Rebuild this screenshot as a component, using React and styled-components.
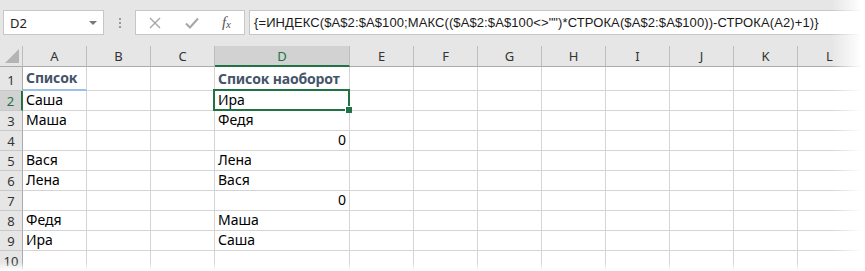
import styled, { createGlobalStyle } from "styled-components";

const GlobalStyle = createGlobalStyle`
  html, body {
    margin: 0;
    padding: 0;
    background: #ffffff;
  }
  body {
    font-family: "Noto Sans", "Liberation Sans", sans-serif;
    overflow: hidden;
  }
`;

const GREEN = "#217346";
const GRID = "#d4d4d4";

const columns = ["A", "B", "C", "D", "E", "F", "G", "H", "I", "J", "K", "L"];
const widths = [64, 64, 64, 135, 64, 64, 64, 64, 64, 64, 64, 64];

const rows = [
  { n: 1, cells: { A: { text: "Список", head: true }, D: { text: "Список наоборот", head: true } } },
  { n: 2, cells: { A: { text: "Саша" }, D: { text: "Ира", active: true } }, selected: true },
  { n: 3, cells: { A: { text: "Маша" }, D: { text: "Федя" } } },
  { n: 4, cells: { D: { text: "0", num: true } } },
  { n: 5, cells: { A: { text: "Вася" }, D: { text: "Лена" } } },
  { n: 6, cells: { A: { text: "Лена" }, D: { text: "Вася" } } },
  { n: 7, cells: { D: { text: "0", num: true } } },
  { n: 8, cells: { A: { text: "Федя" }, D: { text: "Маша" } } },
  { n: 9, cells: { A: { text: "Ира" }, D: { text: "Саша" } } },
  { n: 10, cells: {} },
];

const formula =
  '{=ИНДЕКС($A$2:$A$100;МАКС(($A$2:$A$100<>"")*СТРОКА($A$2:$A$100))-СТРОКА(A2)+1)}';

export default function App() {
  return (
    <>
      <GlobalStyle />
      <Window>
        <Toolbar>
          <NameBox>
            <span>D2</span>
            <DropArrow />
          </NameBox>
          <Grip>
            <i />
            <i />
            <i />
          </Grip>
          <FxBox>
            <svg width="14" height="14" viewBox="0 0 14 14">
              <path d="M2 2 L12 12 M12 2 L2 12" stroke="#a6a6a6" strokeWidth="1.4" fill="none" />
            </svg>
            <svg width="16" height="14" viewBox="0 0 16 14">
              <path d="M2 7.5 L6 11.5 L14 2.5" stroke="#a6a6a6" strokeWidth="2" fill="none" />
            </svg>
            <FxLabel>
              f<sub>x</sub>
            </FxLabel>
          </FxBox>
          <FormulaInput>{formula}</FormulaInput>
        </Toolbar>

        <Sheet>
          <Corner />
          {columns.map((c) => (
            <ColHead key={c} $selected={c === "D"}>
              {c}
            </ColHead>
          ))}
          <ColHead />

          {rows.map((row) => (
            <Row key={row.n} row={row} />
          ))}
        </Sheet>
        <FadeRight />
        <FadeBottom />
      </Window>
    </>
  );
}

const Row = ({ row }) => (
  <>
    <RowHead $selected={row.selected} $tall={row.n === 1}>
      {row.n}
    </RowHead>
    {columns.map((c) => {
      const cell = row.cells[c];
      return (
        <Cell
          key={c}
          $head={cell?.head}
          $num={cell?.num}
          $active={cell?.active}
          $underline={cell?.head && c === "A"}
        >
          {cell?.text}
        </Cell>
      );
    })}
    <Cell />
  </>
);

const Window = styled.div`
  position: relative;
  width: 865px;
  height: 271px;
  overflow: hidden;
  background: #ffffff;
`;

const Toolbar = styled.div`
  height: 46px;
  background: #e6e6e6;
  display: flex;
  align-items: flex-start;
  padding: 10px 0 0 3px;
  box-sizing: border-box;
`;

const NameBox = styled.div`
  width: 101px;
  height: 25px;
  box-sizing: border-box;
  background: #ffffff;
  border: 1px solid #c6c6c6;
  display: flex;
  align-items: center;
  justify-content: space-between;
  padding: 0 6px 0 6px;
  font-size: 13px;
  color: #222;
`;

const DropArrow = styled.span`
  width: 0;
  height: 0;
  border-left: 4px solid transparent;
  border-right: 4px solid transparent;
  border-top: 4px solid #777;
`;

const Grip = styled.div`
  width: 31px;
  height: 25px;
  display: flex;
  flex-direction: column;
  align-items: center;
  justify-content: center;
  gap: 2px;

  i {
    width: 2px;
    height: 2px;
    background: #9a9a9a;
  }
`;

const FxBox = styled.div`
  width: 110px;
  height: 25px;
  box-sizing: border-box;
  background: #ffffff;
  border: 1px solid #c6c6c6;
  display: flex;
  align-items: center;
  justify-content: space-between;
  padding: 0 13px 0 12px;
  margin-right: 4px;
`;

const FxLabel = styled.span`
  font-family: "Liberation Serif", serif;
  font-style: italic;
  font-size: 15px;
  color: #555;
  line-height: 1;

  sub {
    font-size: 11px;
    vertical-align: -1px;
  }
`;

const FormulaInput = styled.div`
  flex: 1;
  height: 25px;
  box-sizing: border-box;
  background: #ffffff;
  border: 1px solid #c6c6c6;
  border-right: none;
  padding: 0 0 0 4px;
  font-family: "Liberation Sans", sans-serif;
  font-size: 13px;
  letter-spacing: 0.1px;
  line-height: 23px;
  color: #1a1a1a;
  white-space: nowrap;
`;

const Sheet = styled.div`
  display: grid;
  grid-template-columns: 23px ${widths.map((w) => `${w}px`).join(" ")} 1fr;
  grid-template-rows: 21px 24px repeat(9, 20px);
  font-family: "Noto Sans", "Liberation Sans", sans-serif;
`;

const Corner = styled.div`
  background: #e6e6e6;
  border-right: 1px solid #bdbdbd;
  border-bottom: 1px solid #ababab;
  position: relative;

  &::after {
    content: "";
    position: absolute;
    right: 3px;
    bottom: 3px;
    width: 0;
    height: 0;
    border-left: 14px solid transparent;
    border-bottom: 14px solid #b4b4b4;
  }
`;

const ColHead = styled.div`
  background: ${(p) => (p.$selected ? "#d2d2d2" : "#e6e6e6")};
  color: ${(p) => (p.$selected ? GREEN : "#333")};
  border-right: 1px solid #bdbdbd;
  border-bottom: ${(p) => (p.$selected ? `2px solid ${GREEN}` : "1px solid #ababab")};
  box-sizing: border-box;
  display: flex;
  align-items: center;
  justify-content: center;
  font-size: 13px;
`;

const RowHead = styled.div`
  background: ${(p) => (p.$selected ? "#d2d2d2" : "#e6e6e6")};
  color: ${(p) => (p.$selected ? GREEN : "#333")};
  border-right: ${(p) => (p.$selected ? `2px solid ${GREEN}` : "1px solid #ababab")};
  border-bottom: 1px solid #c8c8c8;
  box-sizing: border-box;
  display: flex;
  align-items: center;
  justify-content: center;
  padding-top: ${(p) => (p.$tall ? "2px" : "0")};
  font-size: 13px;
`;

const Cell = styled.div`
  position: relative;
  box-sizing: border-box;
  border-right: 1px solid ${GRID};
  border-bottom: ${(p) => (p.$underline ? "2px solid #9bc2e6" : `1px solid ${GRID}`)};
  display: flex;
  align-items: flex-end;
  justify-content: ${(p) => (p.$num ? "flex-end" : "flex-start")};
  padding: 0 3px ${(p) => (p.$head ? "2px" : "1px")} 3px;
  font-size: 14px;
  font-weight: ${(p) => (p.$head ? 700 : 400)};
  letter-spacing: ${(p) => (p.$head ? "-0.15px" : "0")};
  color: ${(p) => (p.$head ? "#44546a" : "#000")};
  white-space: nowrap;
  line-height: 18px;

  ${(p) =>
    p.$active &&
    `
    &::after {
      content: "";
      position: absolute;
      top: -2px;
      left: -2px;
      right: -1px;
      bottom: -1px;
      border: 2px solid ${GREEN};
    }
    &::before {
      content: "";
      position: absolute;
      right: -3px;
      bottom: -3px;
      width: 6px;
      height: 6px;
      background: ${GREEN};
      border-left: 1px solid #fff;
      border-top: 1px solid #fff;
      z-index: 1;
    }
  `}
`;

const FadeRight = styled.div`
  position: absolute;
  top: 0;
  right: 0;
  width: 34px;
  height: 100%;
  background: linear-gradient(to right, rgba(255, 255, 255, 0), #ffffff 90%);
  pointer-events: none;
`;

const FadeBottom = styled.div`
  position: absolute;
  left: 0;
  bottom: 0;
  width: 100%;
  height: 9px;
  background: linear-gradient(to bottom, rgba(255, 255, 255, 0), #ffffff);
  pointer-events: none;
`;
